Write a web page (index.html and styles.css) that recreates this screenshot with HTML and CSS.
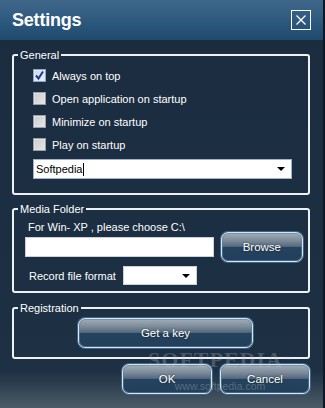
FILE: index.html
```html
<!DOCTYPE html>
<html>
<head>
<meta charset="utf-8">
<link rel="stylesheet" href="styles.css">
</head>
<body>
<div class="window">
  <header class="titlebar">
    <h1 class="title">Settings</h1>
    <button class="close" aria-label="Close">
      <svg width="20" height="20" viewBox="0 0 20 20"><path d="M5.5 5.5 L14.5 14.5 M14.5 5.5 L5.5 14.5" stroke="#fff" stroke-width="1.3" fill="none"/></svg>
    </button>
  </header>
  <main class="content">
    <fieldset class="group group-general">
      <legend>General</legend>
      <div class="group-body">
        <label class="check"><span class="box checked"><svg width="11" height="11" viewBox="0 0 11 11"><path d="M2 5.5 L4.5 8.5 L9 1.5" stroke="#1d3a8c" stroke-width="2" fill="none"/></svg></span>Always on top</label>
        <label class="check"><span class="box"></span>Open application on startup</label>
        <label class="check"><span class="box"></span>Minimize on startup</label>
        <label class="check"><span class="box"></span>Play on startup</label>
        <div class="combo combo-wide"><span class="combo-text">Softpedia<span class="caret"></span></span><span class="arrow"></span></div>
      </div>
    </fieldset>
    <fieldset class="group group-media">
      <legend>Media Folder</legend>
      <div class="group-body">
        <div class="hint">For Win- XP , please choose C:\</div>
        <div class="path-row">
          <div class="textbox"></div>
          <button class="btn btn-browse">Browse</button>
        </div>
        <div class="format-row">
          <span class="format-label">Record file format</span>
          <div class="combo combo-small"><span class="combo-text"></span><span class="arrow"></span></div>
        </div>
      </div>
    </fieldset>
    <fieldset class="group group-reg">
      <legend>Registration</legend>
      <div class="group-body">
        <button class="btn btn-key">Get a key</button>
      </div>
    </fieldset>
    <div class="actions">
      <button class="btn btn-action">OK</button>
      <button class="btn btn-action">Cancel</button>
    </div>
  </main>
  <div class="watermark">
    <span class="wm-logo">SOFTPEDIA<sup>™</sup></span>
    <span class="wm-url">www.softpedia.com</span>
  </div>
</div>
</body>
</html>
```

FILE: styles.css
```css
* { box-sizing: border-box; }

html, body {
  margin: 0;
  padding: 0;
}

body {
  width: 325px;
  height: 408px;
  overflow: hidden;
  font-family: "Liberation Sans", Arial, sans-serif;
  font-size: 11px;
  color: #fff;
  background: #1b2c3e;
}

.window {
  position: relative;
  width: 325px;
  height: 408px;
  border-right: 2px solid #0f1822;
  background: linear-gradient(to bottom, #1b2c3f 0px, #1d3044 370px, #2a3b4b 382px, #4d5c68 408px);
}

.titlebar {
  height: 40px;
  display: flex;
  align-items: center;
  justify-content: space-between;
  padding: 0 12px 0 12px;
  background: linear-gradient(to bottom, #40678a 0%, #2f5a7f 50%, #1f4a6e 100%);
}

.title {
  margin: 0;
  font-size: 18px;
  font-weight: bold;
  color: #fff;
  letter-spacing: -0.2px;
}

.close {
  width: 20px;
  height: 20px;
  padding: 0;
  margin: 0;
  border: 1px solid #fff;
  background: transparent;
  display: flex;
  align-items: center;
  justify-content: center;
}

.close svg { display: block; margin: -1px; }

.content {
  padding: 8px 13px 0 12px;
}

.group {
  margin: 0;
  min-width: 0;
  border: 2px solid #eef1f4;
  border-radius: 3px;
  padding: 0 0 0 4px;
}

.group legend {
  padding: 0 2px;
  line-height: 14px;
  font-size: 11px;
  color: #fff;
}

.group-general .group-body {
  padding: 2px 0 14px 15px;
}

.check {
  display: flex;
  align-items: center;
  height: 23px;
  gap: 6px;
  white-space: nowrap;
}

.box {
  width: 13px;
  height: 13px;
  border: 1px solid #9a9fa5;
  background: linear-gradient(135deg, #c9cbce 0%, #e6e7e8 100%);
  box-shadow: inset 0 0 0 1px #dfe1e3;
  display: flex;
  align-items: center;
  justify-content: center;
  flex: none;
}

.box.checked {
  border-color: #8ea6c2;
  background: linear-gradient(135deg, #c4d6ee 0%, #eef4fb 100%);
  box-shadow: inset 0 0 0 1px #dde8f5;
}

.box svg { display: block; }

.combo {
  position: relative;
  background: #fff;
  border: 1px solid #9fb4cc;
  color: #000;
  display: flex;
  align-items: center;
}

.combo-wide {
  margin-top: 3px;
  width: 259px;
  height: 20px;
}

.combo-text {
  flex: 1;
  padding-left: 2px;
  display: flex;
  align-items: center;
  font-size: 11px;
}

.caret {
  display: inline-block;
  width: 1px;
  height: 13px;
  background: #000;
  margin-left: 1px;
}

.arrow {
  width: 0;
  height: 0;
  border-left: 4px solid transparent;
  border-right: 4px solid transparent;
  border-top: 4px solid #000;
  margin-right: 6px;
}

.group-media {
  margin-top: 7px;
}

.group-media .group-body {
  padding: 4px 5px 6px 7px;
}

.hint {
  line-height: 14px;
  margin-left: 3px;
  white-space: nowrap;
}

.path-row {
  margin-top: -2px;
  display: flex;
  align-items: center;
  gap: 7px;
  height: 30px;
}

.textbox {
  width: 190px;
  height: 20px;
  background: #fff;
  border: 1px solid #c8d2dc;
}

.btn {
  font-family: "Liberation Sans", Arial, sans-serif;
  font-size: 11.5px;
  color: #fff;
  text-shadow: 0 0 2px rgba(0,0,0,0.6);
  border: 1px solid #d6e4ee;
  border-radius: 7px;
  box-shadow: 0 0 0 1px #3e6688, inset 0 0 0 1px rgba(90,130,165,0.6);
  background: linear-gradient(to bottom, #a2aeb9 0%, #7f8e9c 25%, #556a7e 48%, #25435e 50%, #213f5a 100%);
  padding: 0;
  height: 30px;
}

.btn-browse {
  width: 83px;
}

.format-row {
  margin-top: 4px;
  display: flex;
  align-items: center;
  height: 19px;
}

.format-label {
  margin-left: 4px;
  width: 94px;
  white-space: nowrap;
}

.combo-small {
  width: 74px;
  height: 19px;
  border-color: #c8d2dc;
}

.group-reg {
  margin-top: 8px;
}

.group-reg .group-body {
  padding: 3px 0 9px 60px;
}

.btn-key {
  width: 175px;
  display: block;
}

.actions {
  margin-top: 5px;
  display: flex;
  justify-content: flex-end;
  gap: 8px;
}

.btn-action {
  width: 90px;
}

.watermark {
  position: absolute;
  left: 150px;
  top: 348px;
  width: 140px;
  pointer-events: none;
  display: flex;
  flex-direction: column;
  align-items: center;
}

.wm-logo {
  font-family: "Liberation Serif", "Times New Roman", serif;
  font-weight: bold;
  font-size: 22px;
  letter-spacing: 1px;
  color: rgba(190, 195, 200, 0.28);
  line-height: 24px;
}

.wm-logo sup {
  font-size: 8px;
  vertical-align: top;
  font-family: "Liberation Sans", Arial, sans-serif;
  font-weight: normal;
}

.wm-url {
  margin-top: 8px;
  font-size: 10.5px;
  color: rgba(190, 195, 200, 0.35);
  line-height: 12px;
}
```
